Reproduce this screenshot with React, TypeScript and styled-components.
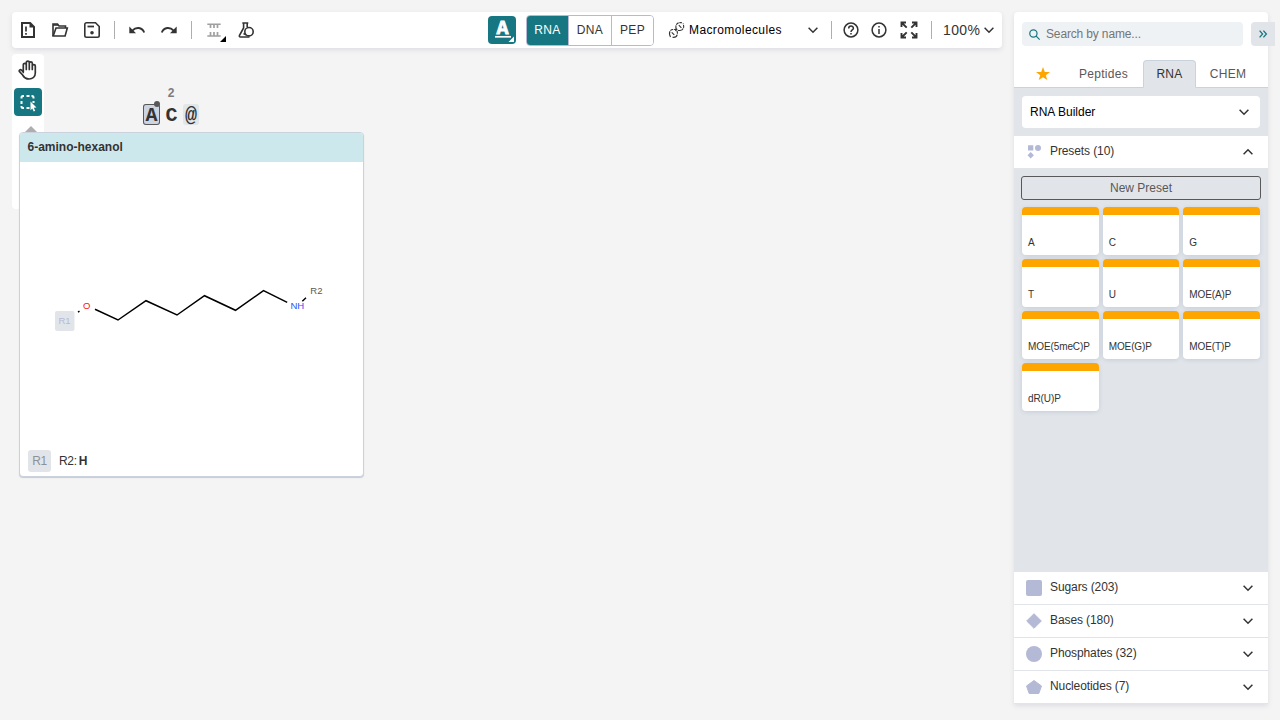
import React from "react";
import styled, { createGlobalStyle } from "styled-components";

const GlobalStyle = createGlobalStyle`
  * { box-sizing: border-box; }
  body {
    margin: 0;
    overflow: hidden;
    background: #f4f4f4;
    color: #333333;
    font: 12px "Liberation Sans", Arial, sans-serif;
  }
  button, input { font: inherit; color: inherit; border: 0; margin: 0; padding: 0; background: none; letter-spacing: inherit; }
  svg { display: block; flex: none; overflow: visible; }
`;

const Page = styled.div`
  display: flex;
  gap: 12px;
  width: 1280px;
  height: 720px;
  padding: 12px 12px 16px;
  background: #f4f4f4;
`;

const Workspace = styled.main`
  position: relative;
  width: 990px;
  display: flex;
  flex-direction: column;
  align-items: flex-start;
  gap: 6px;
`;

const Toolbar = styled.header`
  display: flex;
  align-items: center;
  width: 100%;
  height: 36px;
  background: #fff;
  border-radius: 4px;
  box-shadow: 0 2px 5px rgba(103, 104, 132, 0.15);
`;

const IconButton = styled.button<{ $w?: number }>`
  display: flex;
  align-items: center;
  justify-content: center;
  position: relative;
  flex: none;
  width: ${(p) => p.$w ?? 32}px;
  height: 28px;
`;

const Separator = styled.i<{ $l: number; $r: number }>`
  width: 1px;
  height: 18px;
  background: #aeaeae;
  margin: 0 ${(p) => p.$r}px 0 ${(p) => p.$l}px;
`;

const LayoutButton = styled.button`
  position: relative;
  width: 28px;
  height: 28px;
  margin-left: 226px;
  border-radius: 4px;
  background: #167782;
`;

const Letter = styled.span`
  position: absolute;
  left: 6px;
  top: 3px;
  width: 17px;
  text-align: center;
  color: #fff;
  font: bold 20px/20px "Liberation Mono", monospace;
  -webkit-text-stroke: 0.8px #fff;
`;

const Corner = styled.svg<{ $right?: number }>`
  position: absolute;
  right: ${(p) => p.$right ?? 2}px;
  bottom: 2px;
`;

const Toggle = styled.div`
  display: flex;
  width: 128px;
  height: 31px;
  margin-left: 10px;
  border: 1px solid #b4b9d6;
  border-radius: 4px;
  overflow: hidden;
`;

const ToggleItem = styled.button<{ $active?: boolean; $w: number }>`
  flex: none;
  width: ${(p) => p.$w}px;
  font-size: 12px;
  letter-spacing: 0.4px;
  border-right: 1px solid #b4b9d6;
  background: ${(p) => (p.$active ? "#167782" : "#fff")};
  color: ${(p) => (p.$active ? "#fff" : "#333")};
  ${(p) => p.$active && "margin: -1px 0 -1px -1px; padding-left: 1px;"}
  &:last-child { border-right: 0; }
`;

const ModeSelect = styled.button`
  display: flex;
  align-items: center;
  width: 149px;
  margin-left: 15px;
  gap: 5px;
  color: #000;
  letter-spacing: 0.4px;
  svg:last-child { margin-left: auto; }
`;

const Zoom = styled.button`
  display: flex;
  align-items: center;
  gap: 4px;
  font-size: 14px;
  letter-spacing: 0.4px;
`;

const SideTools = styled.nav`
  display: flex;
  flex-direction: column;
  align-items: center;
  gap: 4px;
  width: 32px;
  height: 155px;
  padding-top: 2px;
  background: #fff;
  border-radius: 4px;
`;

const SideButton = styled.button<{ $active?: boolean }>`
  width: 28px;
  height: 28px;
  display: flex;
  align-items: center;
  justify-content: center;
  border-radius: 4px;
  background: ${(p) => (p.$active ? "#167782" : "transparent")};
`;

const MoreMark = styled.span`
  margin: 6px 0 0 5px;
`;

const Residue = styled.span<{ $x: number; $kind?: "selected" | "soft" }>`
  position: absolute;
  left: ${(p) => p.$x}px;
  top: 92px;
  width: ${(p) => (p.$kind === "soft" ? 16 : 17)}px;
  height: 21px;
  border-radius: 3px;
  text-align: center;
  font: bold 20px/24px "Liberation Mono", monospace;
  ${(p) => p.$kind === "selected" && "background: #ccd4e2; box-shadow: inset 0 0 0 1px #585858;"}
  ${(p) => p.$kind === "soft" && "background: #e1e6e8;"}
`;

const StartDot = styled.i`
  position: absolute;
  right: 0;
  top: -3px;
  width: 6px;
  height: 6px;
  border-radius: 50%;
  background: #585858;
`;

const Position = styled.span`
  position: absolute;
  left: 149px;
  top: 74px;
  width: 20px;
  text-align: center;
  color: #7c7c7f;
  font: bold 12px/14px "Liberation Sans", sans-serif;
`;

const Preview = styled.section`
  position: absolute;
  left: 7px;
  top: 120px;
  width: 345px;
  height: 345px;
  display: flex;
  flex-direction: column;
  background: #fff;
  border: 1px solid #cad3dd;
  border-radius: 4px;
  box-shadow: 0 1px 1px rgba(103, 104, 132, 0.3);
  overflow: hidden;
`;

const PreviewTitle = styled.h2`
  margin: 0;
  height: 29px;
  padding-left: 7.5px;
  background: #cde8ec;
  font: bold 12px/28px "Liberation Sans", sans-serif;
`;

const PreviewFooter = styled.footer`
  display: flex;
  align-items: center;
  gap: 8px;
  margin-top: auto;
  padding: 0 8px 4px;
  letter-spacing: -0.3px;
  b { margin-left: -6px; }
`;

const Chip = styled.span`
  width: 23px;
  height: 22px;
  border-radius: 3px;
  background: #e1e5ea;
  color: #8e9196;
  text-align: center;
  line-height: 22px;
  letter-spacing: -0.3px;
`;

const Library = styled.aside`
  display: flex;
  flex-direction: column;
  width: 254px;
  height: 692px;
  background: #fff;
  border-radius: 4px 4px 0 0;
  box-shadow: 0 2px 5px rgba(103, 104, 132, 0.15);
  letter-spacing: -0.1px;
`;

const SearchRow = styled.div`
  display: flex;
  gap: 8px;
  width: 261px;
  padding: 10px 0 0 8px;
`;

const SearchBox = styled.label`
  display: flex;
  align-items: center;
  gap: 6px;
  width: 221px;
  height: 24px;
  padding-left: 7px;
  border-radius: 4px;
  background: #eff2f5;
`;

const SearchInput = styled.input`
  width: 180px;
  outline: 0;
  letter-spacing: -0.15px;
  &::placeholder { color: #757575; opacity: 1; }
`;

const Collapse = styled.button`
  display: flex;
  align-items: center;
  justify-content: center;
  flex: none;
  width: 24px;
  height: 24px;
  border-radius: 4px 0 0 4px;
  background: #e1e5ea;
`;

const Tabs = styled.div`
  display: flex;
  height: 28px;
  margin-top: 14px;
  flex: none;
`;

const Tab = styled.button<{ $w: number; $active?: boolean; $pad?: string }>`
  display: flex;
  align-items: center;
  justify-content: center;
  width: ${(p) => p.$w}px;
  padding: ${(p) => p.$pad ?? "0"};
  color: ${(p) => (p.$active ? "#333" : "#585858")};
  letter-spacing: 0.3px;
  border-bottom: 1px solid #cad3dd;
  ${(p) => p.$active && `
    border: 1px solid #cad3dd;
    border-bottom-color: #e1e5ea;
    border-radius: 4px 4px 0 0;
    background: #e1e5ea;
  `}
`;

const SelectArea = styled.div`
  padding: 8px;
  background: #e1e5ea;
`;

const Select = styled.button`
  display: flex;
  align-items: center;
  justify-content: space-between;
  width: 100%;
  height: 32px;
  padding: 0 11px 0 8px;
  border-radius: 4px;
  background: #fff;
  color: #000;
  letter-spacing: 0;
`;

const Group = styled.button<{ $line?: boolean }>`
  display: flex;
  align-items: center;
  flex: none;
  height: ${(p) => (p.$line ? 33 : 32)}px;
  padding: 0 15px 0 12px;
  border-bottom: ${(p) => (p.$line ? "1px solid #e1e5ea" : "0")};
  background: #fff;
  svg:last-child { margin-left: auto; }
`;

const GroupName = styled.span`
  margin: -2px 0 0 8px;
`;

const PresetArea = styled.div`
  flex: 1;
  padding: 8px 7px;
  background: #e1e5ea;
`;

const NewPreset = styled.button`
  display: block;
  width: 240px;
  height: 24px;
  border: 1px solid #585858;
  border-radius: 3px;
  color: #585858;
  letter-spacing: 0;
`;

const Grid = styled.div`
  display: grid;
  grid-template-columns: repeat(3, 1fr);
  gap: 4px;
  margin: 7px 1px 0;
`;

const Card = styled.div`
  display: flex;
  align-items: flex-end;
  height: 48px;
  padding: 0 0 6px 6px;
  border-top: 8px solid #ffa500;
  border-radius: 4px;
  background: #fff;
  box-shadow: 0 1px 4px rgba(103, 124, 152, 0.22);
  font-size: 10px;
  line-height: 12px;
`;

const Chevron = ({ up }: { up?: boolean }) => (
  <svg width="10" height="6" viewBox="0 0 10 6" fill="none" stroke="#333" strokeWidth="1.5">
    <path d={up ? "M.6 5.2 5 .8l4.400 4.400" : "M.6.8 5 5.200 9.400.8"} />
  </svg>
);

const NewIcon = () => (
  <svg width="14" height="16" viewBox="0 0 14 16">
    <path d="M1 1h8.200L13 4.800V15H1Z" fill="none" stroke="#333" strokeWidth="2" />
    <path d="M8.500.5V5.500H13.500Z" fill="#333" />
    <path d="M5 4.500v5M5 11v1.800" stroke="#333" strokeWidth="1.700" />
  </svg>
);

const OpenIcon = () => (
  <svg width="16" height="14" viewBox="0 0 16 14" fill="none" stroke="#333" strokeWidth="1.600">
    <path d="M1 13V1h4.500l1.500 2h6.500v2" />
    <path d="M1.200 13 4 5h11.300l-2.200 8Z" />
    <path d="M1 2h5" />
  </svg>
);

const SaveIcon = () => (
  <svg width="16" height="16" viewBox="0 0 16 16">
    <path d="M2.500.8h9L15.200 4.500v9a1.700 1.700 0 0 1-1.700 1.700h-11A1.700 1.700 0 0 1 .8 13.500v-11A1.700 1.700 0 0 1 2.500.8Z" fill="none" stroke="#333" strokeWidth="1.600" />
    <path d="M3.500 4.500h6.500" stroke="#333" strokeWidth="1.800" />
    <circle cx="8" cy="10.700" r="1.800" fill="#333" />
  </svg>
);

const UndoIcon = ({ flip }: { flip?: boolean }) => (
  <svg width="16" height="8" viewBox="0 0 16 8">
    <g transform={flip ? "matrix(-1 0 0 1 16 0)" : undefined}>
      <path d="M.3.5V7.200H7Z" fill="#333" />
      <path d="M3.300 4.600C7 .8 13 1 15.200 6.500" fill="none" stroke="#333" strokeWidth="1.900" />
    </g>
  </svg>
);

const ChainIcon = () => (
  <svg width="14" height="14" viewBox="0 0 14 14" stroke="#a0a0a0" fill="none">
    <path d="M.3 1.200h13.400M.3 13h13.400" strokeWidth="1.500" />
    <path d="M3.500 1v4M7 1v4M10.500 1v4M3.500 9v4M7 9v4M10.500 9v4" strokeWidth="1.700" />
  </svg>
);

const FlaskIcon = () => (
  <svg width="16" height="16" viewBox="0 0 16 16" fill="none" stroke="#333" strokeWidth="1.600">
    <path d="M4.300 1h6M5.600 1v5L1.500 13.300Q.9 15 2.500 15h9M9.200 1v4" />
    <circle cx="11" cy="9.700" r="4.200" />
    <path d="m8 12.700-2.500-1.200" />
  </svg>
);

const HelixIcon = () => (
  <svg width="15" height="16" viewBox="0 0 15 16" fill="none" stroke="#333" strokeWidth="1.100">
    <path d="M1.500 15C-.3 11.500.3 7.500 4 7.500 5.500 7.500 6.500 7.800 7.300 7 6 4 7.500.8 11 .6L13 .8" strokeDasharray="6 .8 3 .8" />
    <path d="M3.500 15.300C7.500 15.800 9.300 12.800 8 9 9 8.200 9.800 8.500 11 8.500 14.600 8.300 15.500 5 14 1.500" strokeDasharray="6 .8 3 .8" />
    <path d="m2.700 10.300 2.600 2.600M9.800 3.200l2.600 2.600M6.300 8.800l2-2" />
  </svg>
);

const RoundIcon = ({ info }: { info?: boolean }) => (
  <svg width="16" height="16" viewBox="0 0 16 16" fill="none" stroke="#333" strokeWidth="1.500">
    <circle cx="8" cy="8" r="6.900" />
    {info ? (
      <path d="M8 7v5M8 4v1.600" />
    ) : (
      <path d="M5.700 6.500C5.700 3.200 10.400 3.400 10.400 6.200 10.400 8 8 7.900 8 10M8 11v1.500" />
    )}
  </svg>
);

const FullIcon = () => (
  <svg width="18" height="18" viewBox="-0.500 -0.500 18 18" fill="none" stroke="#333" strokeWidth="1.900">
    <path d="M1 5.500V1h4.500M1 1l5.200 5.200M11.500 1H16v4.500M16 1l-5.200 5.200M1 11.500V16h4.500M1 16l5.200-5.200M16 11.500V16h-4.500M16 16l-5.200-5.200" />
  </svg>
);

const HandIcon = () => (
  <svg width="18" height="20" viewBox="0.700 0 18 20" fill="none" stroke="#333" strokeWidth="1.700" strokeLinecap="round" strokeLinejoin="round">
    <path d="M5 12.500V4.700c0-1.800 3-1.800 3 0V9.500M8 4.500V2.400c0-1.800 3-1.800 3 0v7.100M11 3.300c0-1.800 3-1.800 3 0v6.200M14 6c0-1.800 3-1.800 3 0v7c0 3.800-2.800 6-6.200 6-3.200 0-5-1.300-6.500-4L1 11.400c-.5-1.400 1-2.200 2.200-1.200L5 12" />
  </svg>
);

const SelectIcon = () => (
  <svg width="17" height="17" viewBox="0.500 0 17 17">
    <path d="M2 4.500V3.500Q2 2 3.500 2h1M7 2h3M12 2h.5Q14 2 14 3.500v1M14 7v2M2 7v3M2 12v.5Q2 14 3.500 14h1M7 14h3" fill="none" stroke="#fff" strokeWidth="2" />
    <path d="m11 7.500 6 6-2.700.3 1.400 2.900-1.500.7-1.400-2.900-1.800 1.700Z" fill="#fff" />
  </svg>
);

const BOND_PATH = "M75 147.300 98 158l28-19.300 31 14.300 27.500-19.300 31 14.600 28-19.600 23.700 11.600";

const Molecule = () => (
  <svg width="343" height="285" viewBox="0 0 343 285" fontSize="9.500" fontFamily="Liberation Sans">
    <rect x="35" y="149" width="19.500" height="20" rx="2" fill="#e1e5ea" />
    <text x="38.500" y="162.300" fill="#b4b9d6">R1</text>
    <text x="63" y="147" fill="#ff0d0d">O</text>
    <path d={BOND_PATH} fill="none" stroke="#000" strokeWidth="1.500" />
    <path d="m58 150.200 1.500-1M282.300 139.300l3.700-3.500" stroke="#000" strokeWidth="1.500" />
    <text x="270.500" y="147" fill="#3050f8">NH</text>
    <text x="290.300" y="132.300" fill="#585858">R2</text>
  </svg>
);

const PresetIcon = () => (
  <svg width="16" height="16" viewBox="0 0 16 16" fill="#b4b9d6">
    <rect x="2" y="1.200" width="5.300" height="5.300" rx=".5" />
    <circle cx="12" cy="4" r="3" />
    <path d="m4.700 8 3.200 3.200-3.200 3.200-3.200-3.200Z" />
  </svg>
);

const GROUP_SHAPES: Record<string, React.ReactNode> = {
  Sugars: <rect width="16" height="16" rx="2" />,
  Bases: <path d="m8 .7 7.300 7.300L8 15.300.7 8Z" stroke="#b4b9d6" strokeLinejoin="round" />,
  Phosphates: <circle cx="8" cy="8" r="8" />,
  Nucleotides: <path d="m8 1.500 7.500 5.500-2.700 7.500H3.200L.5 7Z" stroke="#b4b9d6" strokeLinejoin="round" />,
};

const GROUPS: [string, number][] = [["Sugars", 203], ["Bases", 180], ["Phosphates", 32], ["Nucleotides", 7]];
const PRESETS = ["A", "C", "G", "T", "U", "MOE(A)P", "MOE(5meC)P", "MOE(G)P", "MOE(T)P", "dR(U)P"];

export default function App() {
  return (
    <Page>
      <GlobalStyle />
      <Workspace>
        <Toolbar>
          <IconButton><NewIcon /></IconButton>
          <IconButton><OpenIcon /></IconButton>
          <IconButton><SaveIcon /></IconButton>
          <Separator $l={6} $r={6} />
          <IconButton><UndoIcon /></IconButton>
          <IconButton><UndoIcon flip /></IconButton>
          <Separator $l={6} $r={6} />
          <IconButton>
            <ChainIcon />
            <Corner $right={4} width="6" height="6"><path d="M6 0v6H0Z" fill="#000" /></Corner>
          </IconButton>
          <IconButton><FlaskIcon /></IconButton>
          <LayoutButton>
            <Letter>A</Letter>
            <Corner width="21" height="8"><path d="M2 2.800h16" stroke="#fff" strokeWidth="1.700" /><path d="M21 2.500V8h-5.500Z" fill="#fff" /></Corner>
          </LayoutButton>
          <Toggle>
            <ToggleItem $active $w={43}>RNA</ToggleItem>
            <ToggleItem $w={43}>DNA</ToggleItem>
            <ToggleItem $w={41}>PEP</ToggleItem>
          </Toggle>
          <ModeSelect><HelixIcon />Macromolecules<Chevron /></ModeSelect>
          <Separator $l={13} $r={5} />
          <IconButton $w={28}><RoundIcon /></IconButton>
          <IconButton $w={28}><RoundIcon info /></IconButton>
          <IconButton><FullIcon /></IconButton>
          <Separator $l={6} $r={11} />
          <Zoom>100%<Chevron /></Zoom>
        </Toolbar>
        <SideTools>
          <SideButton><HandIcon /></SideButton>
          <SideButton $active><SelectIcon /></SideButton>
          <MoreMark><svg width="14" height="7"><path d="M7 0 14 7H0Z" fill="#aeaeae" /></svg></MoreMark>
        </SideTools>
        <Position>2</Position>
        <Residue $x={131} $kind="selected">A<StartDot /></Residue>
        <Residue $x={151}>C</Residue>
        <Residue $x={171} $kind="soft">@</Residue>
        <Preview>
          <PreviewTitle>6-amino-hexanol</PreviewTitle>
          <Molecule />
          <PreviewFooter><Chip>R1</Chip><span>R2:</span><b>H</b></PreviewFooter>
        </Preview>
      </Workspace>
      <Library>
        <SearchRow>
          <SearchBox>
            <svg width="11" height="11" viewBox="0 0 10 10" fill="none" stroke="#167782" strokeWidth="1.100"><circle cx="4" cy="4" r="3.300" /><path d="m6.300 6.300 3.400 3.400" /></svg>
            <SearchInput placeholder="Search by name..." />
          </SearchBox>
          <Collapse>
            <svg width="8" height="8" viewBox="0 0 8 8" fill="none" stroke="#167782" strokeWidth="1.300"><path d="m.6.6 3 3.400-3 3.400M4.400.6l3 3.400-3 3.400" /></svg>
          </Collapse>
        </SearchRow>
        <Tabs>
          <Tab $w={50} $pad="0 0 0 8px">
            <svg width="14" height="14" viewBox="0 0 14 14"><path d="m7 0 1.800 4.900 5.200.1-4.200 3.200L11.300 13 7 10.200 2.700 13l1.500-4.800L0 5l5.200-.1Z" fill="#ffa500" /></svg>
          </Tab>
          <Tab $w={79}>Peptides</Tab>
          <Tab $w={53} $active>RNA</Tab>
          <Tab $w={72} $pad="0 8px 0 0">CHEM</Tab>
        </Tabs>
        <SelectArea><Select>RNA Builder<Chevron /></Select></SelectArea>
        <Group><PresetIcon /><GroupName>Presets (10)</GroupName><Chevron up /></Group>
        <PresetArea>
          <NewPreset>New Preset</NewPreset>
          <Grid>{PRESETS.map((name) => <Card key={name}>{name}</Card>)}</Grid>
        </PresetArea>
        {GROUPS.map(([name, count]) => (
          <Group key={name} $line>
            <svg width="16" height="16" viewBox="0 0 16 16" fill="#b4b9d6">{GROUP_SHAPES[name]}</svg>
            <GroupName>{name} ({count})</GroupName>
            <Chevron />
          </Group>
        ))}
      </Library>
    </Page>
  );
}
